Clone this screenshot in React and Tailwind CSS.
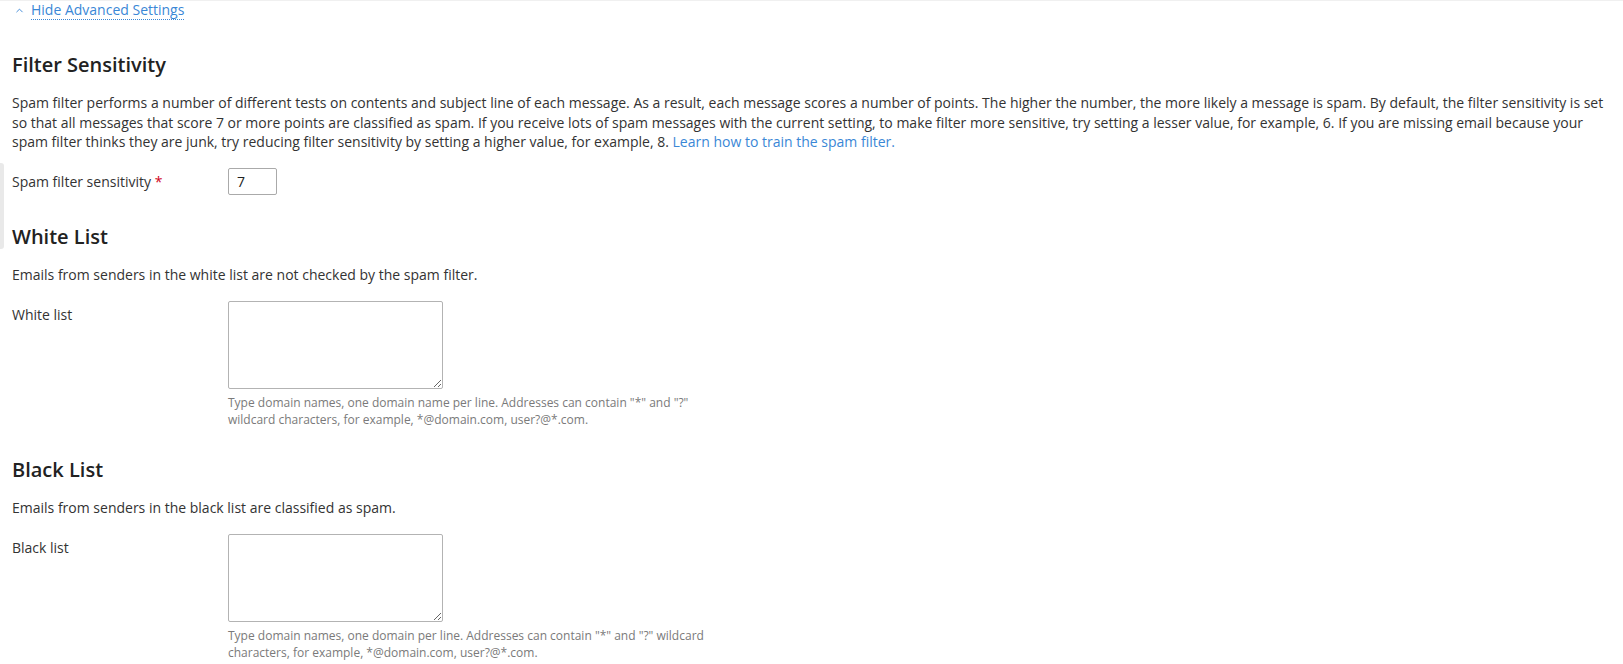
import React from 'react';
import { ChevronUp } from 'lucide-react';

const font = { fontFamily: '"Open Sans", "Noto Sans", Arial, sans-serif' };

const Field = ({ label, required, children }) => (
  <div className="flex items-start mt-[16px]">
    <div className="w-[216px] shrink-0 pt-[4px] leading-[20px]">
      {label}
      {required && <span className="text-[#d0021b]"> *</span>}
    </div>
    <div>{children}</div>
  </div>
);

const ListField = ({ title, description, label, hint }) => (
  <section className="mt-[30px]">
    <h2 className="text-[20px] leading-[24px] font-semibold text-[#222]">{title}</h2>
    <p className="mt-[16px] leading-[20px]">{description}</p>
    <Field label={label}>
      <textarea className="block w-[215px] h-[88px] border border-[#b3b3b3] rounded-[2px] outline-none" />
      <p className="mt-[5px] max-w-[500px] text-[12px] leading-[17px] text-[#7a7a7a]">{hint}</p>
    </Field>
  </section>
);

const App = () => {
  return (
    <div className="relative min-h-[664px] bg-white border-t border-[#f0f0f0] text-[14px] text-[#333]" style={font}>
      {/* side grip */}
      <div className="absolute left-0 top-[162px] w-[4px] h-[86px] rounded-r-[3px] bg-[#e9e9e9]" />

      <div className="px-[12px]">
        <div className="flex items-center h-[19px]">
          <ChevronUp size={11} strokeWidth={2} className="ml-[2px] text-[#3a87d6]" />
          <a className="ml-[6px] text-[#3a87d6] leading-[18px] border-b border-dotted border-[#3a87d6]">
            Hide Advanced Settings
          </a>
        </div>

        <section className="mt-[33px]">
          <h2 className="text-[20px] leading-[24px] font-semibold text-[#222]">Filter Sensitivity</h2>
          <p className="mt-[16px] leading-[19.5px]">
            Spam filter performs a number of different tests on contents and subject line of each message. As a result, each message scores a number of points. The higher the number, the more likely a message is spam. By default, the filter sensitivity is set so that all messages that score 7 or more points are classified as spam. If you receive lots of spam messages with the current setting, to make filter more sensitive, try setting a lesser value, for example, 6. If you are missing email because your spam filter thinks they are junk, try reducing filter sensitivity by setting a higher value, for example, 8.{' '}
            <a className="text-[#3a87d6]">Learn how to train the spam filter.</a>
          </p>
          <Field label="Spam filter sensitivity" required>
            <input
              defaultValue="7"
              className="block w-[49px] h-[27px] px-[8px] border border-[#aaa] rounded-[2px] text-[14px] text-[#222] outline-none"
            />
          </Field>
        </section>

        <ListField
          title="White List"
          description="Emails from senders in the white list are not checked by the spam filter."
          label="White list"
          hint={'Type domain names, one domain name per line. Addresses can contain "*" and "?" wildcard characters, for example, *@domain.com, user?@*.com.'}
        />

        <ListField
          title="Black List"
          description="Emails from senders in the black list are classified as spam."
          label="Black list"
          hint={'Type domain names, one domain per line. Addresses can contain "*" and "?" wildcard characters, for example, *@domain.com, user?@*.com.'}
        />
      </div>
    </div>
  );
};

export default App;
